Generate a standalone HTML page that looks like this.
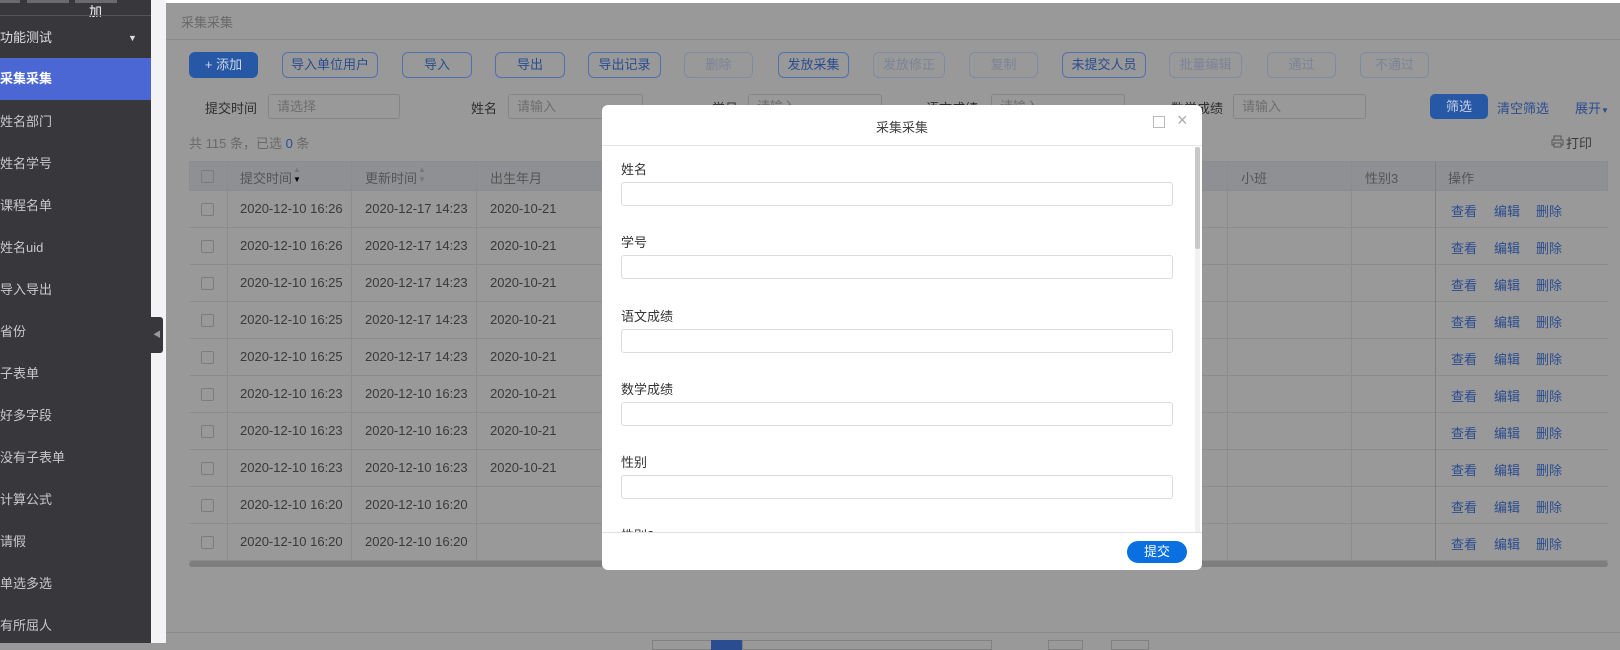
<!DOCTYPE html>
<html><head><meta charset="utf-8"><style>
*{box-sizing:border-box;margin:0;padding:0}
body{width:1620px;height:643px;overflow:hidden;position:relative;background:#999;font-family:"Liberation Sans","Noto Sans CJK SC",sans-serif;font-size:13px;color:#3a3a3a}
.a{position:absolute}
#side{left:0;top:0;width:151px;height:643px;background:#38373c}
.si{position:absolute;left:0;width:151px;height:42px;line-height:42px;color:#c8c8c8;font-size:13px}
#strip{left:151px;top:0;width:15px;height:643px;background:#f3f3f6}
.btn{position:absolute;top:52px;height:26px;border:1px solid #5070b0;border-radius:6px;color:#2a4c90;text-align:center;line-height:24px;font-size:13px}
.dis{border-color:#7f8aa3;color:#7a8397}
.lbl{position:absolute;top:98px;color:#2e2e2e}
.inp{position:absolute;top:94px;height:25px;border:1px solid #858585;border-radius:3px;color:#6e6e6e;padding-left:8px;line-height:23px}
.row{position:absolute;left:189px;width:1419px;height:37px;border-bottom:1px solid #8c8c8c}
.cb{position:absolute;left:12px;top:12px;width:13px;height:13px;border:1px solid #7c7c7c;border-radius:2px}
.c{position:absolute;top:0;line-height:36px;color:#3a3a3a}
.vl{position:absolute;top:162px;height:399px;width:1px;background:#8c8c8c}
.lk{position:absolute;color:#2a4c90}
.fl{position:absolute;left:621px;color:#333}
.fi{position:absolute;left:621px;width:552px;height:24px;border:1px solid #dcdcdc;border-radius:3px;background:#fff}
</style></head><body>
<div class="a" style="left:166px;top:0;width:1454px;height:3px;background:#fff"></div>
<div id="side" class="a">
 <div class="a" style="left:0;top:0;width:20px;height:3px;background:#6a6a6e"></div>
 <div class="a" style="left:27px;top:0;width:42px;height:3px;background:#6a6a6e"></div>
 <div class="a" style="left:75px;top:0;width:42px;height:3px;background:#6a6a6e"></div>
 <div class="a" style="left:89px;top:1px;color:#fff;font-size:13px">加</div>
 <div class="a" style="left:0;top:15px;width:151px;height:1px;background:#55545a"></div>
 <div class="si" style="top:17px;color:#ddd">功能测试<span style="position:absolute;left:128px;font-size:9px">▼</span></div>
 <div class="si" style="top:58px;background:#4a67d4;color:#fff;font-weight:bold">采集采集</div>
 <div class="si" style="top:101px">姓名部门</div>
 <div class="si" style="top:143px">姓名学号</div>
 <div class="si" style="top:185px">课程名单</div>
 <div class="si" style="top:227px">姓名uid</div>
 <div class="si" style="top:269px">导入导出</div>
 <div class="si" style="top:311px">省份</div>
 <div class="si" style="top:353px">子表单</div>
 <div class="si" style="top:395px">好多字段</div>
 <div class="si" style="top:437px">没有子表单</div>
 <div class="si" style="top:479px">计算公式</div>
 <div class="si" style="top:521px">请假</div>
 <div class="si" style="top:563px">单选多选</div>
 <div class="si" style="top:605px">有所屈人</div>
</div>
<div id="strip" class="a"></div>
<div class="a" style="left:151px;top:317px;width:12px;height:36px;background:#38373c;border-radius:0 3px 3px 0;color:#999;font-size:8px;line-height:36px;text-align:center">◀</div>

<div class="a" style="left:181px;top:12px;color:#6a6a6a">采集采集</div>
<div class="a" style="left:166px;top:39px;width:1454px;height:1px;background:#8c8c8c"></div>

<div class="btn" style="left:189px;width:69px;background:#2758a6;border-color:#2758a6;color:#cfd6e6">+ 添加</div>
<div class="btn" style="left:282px;width:96px">导入单位用户</div>
<div class="btn" style="left:402px;width:70px">导入</div>
<div class="btn" style="left:495px;width:70px">导出</div>
<div class="btn" style="left:588px;width:73px">导出记录</div>
<div class="btn dis" style="left:684px;width:69px">删除</div>
<div class="btn" style="left:778px;width:71px">发放采集</div>
<div class="btn dis" style="left:873px;width:72px">发放修正</div>
<div class="btn dis" style="left:969px;width:69px">复制</div>
<div class="btn" style="left:1062px;width:84px">未提交人员</div>
<div class="btn dis" style="left:1169px;width:73px">批量编辑</div>
<div class="btn dis" style="left:1267px;width:69px">通过</div>
<div class="btn dis" style="left:1360px;width:69px">不通过</div>

<div class="lbl" style="left:205px">提交时间</div><div class="inp" style="left:268px;width:132px">请选择</div>
<div class="lbl" style="left:471px">姓名</div><div class="inp" style="left:508px;width:135px">请输入</div>
<div class="lbl" style="left:712px">学号</div><div class="inp" style="left:748px;width:134px">请输入</div>
<div class="lbl" style="left:926px">语文成绩</div><div class="inp" style="left:991px;width:134px">请输入</div>
<div class="lbl" style="left:1171px">数学成绩</div><div class="inp" style="left:1233px;width:133px">请输入</div>
<div class="a" style="left:1430px;top:94px;width:58px;height:25px;background:#2758a6;border-radius:5px;color:#c8d1e4;text-align:center;line-height:25px">筛选</div>
<div class="a" style="left:1497px;top:98px;color:#2a4c90">清空筛选</div>
<div class="a" style="left:1575px;top:98px;color:#2a4c90">展开<span style="font-size:8px">▼</span></div>

<div class="a" style="left:189px;top:133px;color:#6a6a6a">共 115 条，已选 <span style="color:#2a4c90">0</span> 条</div>
<div class="a" style="left:1566px;top:133px;color:#3a3a3a">打印</div>
<svg class="a" style="left:1551px;top:135px" width="13" height="13" viewBox="0 0 13 13"><rect x="3" y="1" width="7" height="4" fill="none" stroke="#555"/><rect x="1" y="5" width="11" height="5" fill="none" stroke="#555"/><rect x="3" y="8" width="7" height="4" fill="#999" stroke="#555"/></svg>

<div class="a" style="left:189px;top:161px;width:1419px;height:30px;background:#8f9094;border:1px solid #8c8c8c"></div>
<div class="a" style="left:201px;top:170px;width:13px;height:13px;border:1px solid #7c7c7c;border-radius:2px"></div>
<div class="a" style="left:240px;top:168px;color:#555">提交时间</div>
<div class="a" style="left:293px;top:165px;font-size:8px;color:#777">▲</div>
<div class="a" style="left:293px;top:175px;font-size:8px;color:#000">▼</div>
<div class="a" style="left:365px;top:168px;color:#555">更新时间</div>
<div class="a" style="left:418px;top:165px;font-size:8px;color:#777">▲</div>
<div class="a" style="left:418px;top:175px;font-size:8px;color:#777">▼</div>
<div class="a" style="left:490px;top:168px;color:#555">出生年月</div>
<div class="a" style="left:1241px;top:168px;color:#555">小班</div>
<div class="a" style="left:1365px;top:168px;color:#555">性别3</div>
<div class="a" style="left:1448px;top:168px;color:#555">操作</div>

<div id="rows"></div>
<div class="vl" style="left:227px"></div><div class="vl" style="left:351px"></div><div class="vl" style="left:476px"></div>
<div class="vl" style="left:1227px"></div><div class="vl" style="left:1351px"></div><div class="vl" style="left:1435px;background:#808080"></div>
<div class="a" style="left:189px;top:561px;width:1419px;height:6px;background:#7e7e7e;border-radius:3px"></div>
<div class="a" style="left:166px;top:632px;width:1454px;height:1px;background:#8c8c8c"></div>
<div class="a" style="left:652px;top:640px;width:60px;height:10px;border:1px solid #808080"></div>
<div class="a" style="left:711px;top:640px;width:31px;height:10px;background:#2a4c90"></div>
<div class="a" style="left:742px;top:640px;width:250px;height:10px;border:1px solid #808080"></div>
<div class="a" style="left:1048px;top:640px;width:35px;height:10px;border:1px solid #808080"></div>
<div class="a" style="left:1111px;top:640px;width:38px;height:10px;border:1px solid #808080"></div>

<div class="a" style="left:602px;top:105px;width:600px;height:465px;background:#fff;border-radius:6px;overflow:hidden">
 <div class="a" style="left:0;top:12px;width:600px;text-align:center;color:#444">采集采集</div>
 <div class="a" style="left:551px;top:11px;width:12px;height:12px;border:1px solid #bbb"></div>
 <div class="a" style="left:575px;top:5px;color:#aaa;font-size:18px">×</div>
 <div class="a" style="left:0;top:40px;width:600px;height:1px;background:#e5e5e5"></div>
 <div class="a" style="left:593px;top:42px;width:5px;height:385px;background:#f1f1f1"></div>
 <div class="a" style="left:593px;top:42px;width:5px;height:102px;background:#c8c8c8;border-radius:2px"></div>
 <div class="a" style="left:0;top:427px;width:600px;height:1px;background:#e0e0e0"></div>
 <div class="a" style="left:525px;top:436px;width:60px;height:22px;background:#0a6fe0;border-radius:11px;color:#fff;text-align:center;line-height:22px">提交</div>
</div>
<div class="fl" style="top:159px">姓名</div><div class="fi" style="top:182px"></div>
<div class="fl" style="top:232px">学号</div><div class="fi" style="top:255px"></div>
<div class="fl" style="top:306px">语文成绩</div><div class="fi" style="top:329px"></div>
<div class="fl" style="top:379px">数学成绩</div><div class="fi" style="top:402px"></div>
<div class="fl" style="top:452px">性别</div><div class="fi" style="top:475px"></div>
<div class="a" style="left:621px;top:527px;height:5px;overflow:hidden;color:#333"><div style="margin-top:-2px">性别2</div></div>

<script>
var d=[["16:26","12-17 14:23",1],["16:26","12-17 14:23",1],["16:25","12-17 14:23",1],["16:25","12-17 14:23",1],["16:25","12-17 14:23",1],["16:23","12-10 16:23",1],["16:23","12-10 16:23",1],["16:23","12-10 16:23",1],["16:20","12-10 16:20",0],["16:20","12-10 16:20",0]];
var h="";
for(var i=0;i<10;i++){var t=191+i*37;
h+='<div class="row" style="top:'+t+'px"><div class="cb"></div><div class="c" style="left:51px">2020-12-10 '+d[i][0]+'</div><div class="c" style="left:176px">2020-'+d[i][1]+'</div>'+(d[i][2]?'<div class="c" style="left:301px">2020-10-21</div>':'')+'<div class="lk" style="left:1262px;top:10px">查看</div><div class="lk" style="left:1305px;top:10px">编辑</div><div class="lk" style="left:1347px;top:10px">删除</div></div>';}
document.getElementById("rows").innerHTML=h;
</script>
</body></html>
